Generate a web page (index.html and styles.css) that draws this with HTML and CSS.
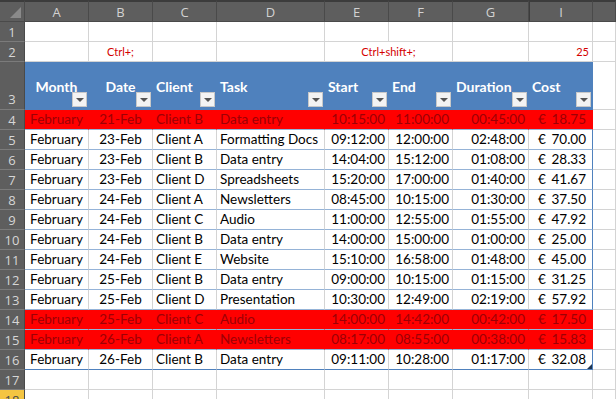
FILE: index.html
```html
<!DOCTYPE html>
<html>
<head>
<meta charset="utf-8">
<link rel="stylesheet" href="styles.css">
</head>
<body>
<div class="sheet">
  <div class="r hdr">
    <div class="c corner"><span class="tri"></span></div>
    <div class="c ch">A</div><div class="c ch">B</div><div class="c ch">C</div><div class="c ch">D</div>
    <div class="c ch">E</div><div class="c ch">F</div><div class="c ch">G</div><div class="c ch hid">I</div><div class="c ch"></div>
  </div>
  <div class="r">
    <div class="c rh">1</div>
    <div class="c"></div><div class="c"></div><div class="c"></div><div class="c"></div>
    <div class="c"></div><div class="c"></div><div class="c"></div><div class="c"></div><div class="c"></div>
  </div>
  <div class="r">
    <div class="c rh">2</div>
    <div class="c"></div><div class="c note ctr">Ctrl+;</div><div class="c"></div><div class="c"></div>
    <div class="c note ctr span2">Ctrl+shift+;</div><div class="c"></div><div class="c note rt">25</div><div class="c"></div>
  </div>
  <div class="r head">
    <div class="c rh rh3">3</div>
    <div class="c th ctr">Month<span class="dd"></span></div>
    <div class="c th ctr">Date<span class="dd"></span></div>
    <div class="c th">Client<span class="dd"></span></div>
    <div class="c th">Task<span class="dd"></span></div>
    <div class="c th">Start<span class="dd"></span></div>
    <div class="c th">End<span class="dd"></span></div>
    <div class="c th">Duration<span class="dd"></span></div>
    <div class="c th">Cost<span class="dd"></span></div>
    <div class="c"></div>
  </div>

  <div class="r t bad"><div class="c rh">4</div><div class="c ctr">February</div><div class="c ctr">21-Feb</div><div class="c">Client B</div><div class="c">Data entry</div><div class="c rt">10:15:00</div><div class="c rt">11:00:00</div><div class="c rt">00:45:00</div><div class="c cost"><span>€</span><span>18.75</span></div><div class="c"></div></div>
  <div class="r t"><div class="c rh">5</div><div class="c ctr">February</div><div class="c ctr">23-Feb</div><div class="c">Client A</div><div class="c">Formatting Docs</div><div class="c rt">09:12:00</div><div class="c rt">12:00:00</div><div class="c rt">02:48:00</div><div class="c cost"><span>€</span><span>70.00</span></div><div class="c"></div></div>
  <div class="r t"><div class="c rh">6</div><div class="c ctr">February</div><div class="c ctr">23-Feb</div><div class="c">Client B</div><div class="c">Data entry</div><div class="c rt">14:04:00</div><div class="c rt">15:12:00</div><div class="c rt">01:08:00</div><div class="c cost"><span>€</span><span>28.33</span></div><div class="c"></div></div>
  <div class="r t"><div class="c rh">7</div><div class="c ctr">February</div><div class="c ctr">23-Feb</div><div class="c">Client D</div><div class="c">Spreadsheets</div><div class="c rt">15:20:00</div><div class="c rt">17:00:00</div><div class="c rt">01:40:00</div><div class="c cost"><span>€</span><span>41.67</span></div><div class="c"></div></div>
  <div class="r t"><div class="c rh">8</div><div class="c ctr">February</div><div class="c ctr">24-Feb</div><div class="c">Client A</div><div class="c">Newsletters</div><div class="c rt">08:45:00</div><div class="c rt">10:15:00</div><div class="c rt">01:30:00</div><div class="c cost"><span>€</span><span>37.50</span></div><div class="c"></div></div>
  <div class="r t"><div class="c rh">9</div><div class="c ctr">February</div><div class="c ctr">24-Feb</div><div class="c">Client C</div><div class="c">Audio</div><div class="c rt">11:00:00</div><div class="c rt">12:55:00</div><div class="c rt">01:55:00</div><div class="c cost"><span>€</span><span>47.92</span></div><div class="c"></div></div>
  <div class="r t"><div class="c rh">10</div><div class="c ctr">February</div><div class="c ctr">24-Feb</div><div class="c">Client B</div><div class="c">Data entry</div><div class="c rt">14:00:00</div><div class="c rt">15:00:00</div><div class="c rt">01:00:00</div><div class="c cost"><span>€</span><span>25.00</span></div><div class="c"></div></div>
  <div class="r t"><div class="c rh">11</div><div class="c ctr">February</div><div class="c ctr">24-Feb</div><div class="c">Client E</div><div class="c">Website</div><div class="c rt">15:10:00</div><div class="c rt">16:58:00</div><div class="c rt">01:48:00</div><div class="c cost"><span>€</span><span>45.00</span></div><div class="c"></div></div>
  <div class="r t"><div class="c rh">12</div><div class="c ctr">February</div><div class="c ctr">25-Feb</div><div class="c">Client B</div><div class="c">Data entry</div><div class="c rt">09:00:00</div><div class="c rt">10:15:00</div><div class="c rt">01:15:00</div><div class="c cost"><span>€</span><span>31.25</span></div><div class="c"></div></div>
  <div class="r t"><div class="c rh">13</div><div class="c ctr">February</div><div class="c ctr">25-Feb</div><div class="c">Client D</div><div class="c">Presentation</div><div class="c rt">10:30:00</div><div class="c rt">12:49:00</div><div class="c rt">02:19:00</div><div class="c cost"><span>€</span><span>57.92</span></div><div class="c"></div></div>
  <div class="r t bad"><div class="c rh">14</div><div class="c ctr">February</div><div class="c ctr">25-Feb</div><div class="c">Client C</div><div class="c">Audio</div><div class="c rt">14:00:00</div><div class="c rt">14:42:00</div><div class="c rt">00:42:00</div><div class="c cost"><span>€</span><span>17.50</span></div><div class="c"></div></div>
  <div class="r t bad"><div class="c rh">15</div><div class="c ctr">February</div><div class="c ctr">26-Feb</div><div class="c">Client A</div><div class="c">Newsletters</div><div class="c rt">08:17:00</div><div class="c rt">08:55:00</div><div class="c rt">00:38:00</div><div class="c cost"><span>€</span><span>15.83</span></div><div class="c"></div></div>
  <div class="r t last"><div class="c rh">16</div><div class="c ctr">February</div><div class="c ctr">26-Feb</div><div class="c">Client B</div><div class="c">Data entry</div><div class="c rt">09:11:00</div><div class="c rt">10:28:00</div><div class="c rt">01:17:00</div><div class="c cost"><span>€</span><span>32.08</span><span class="grip"></span></div><div class="c"></div></div>

  <div class="r">
    <div class="c rh">17</div>
    <div class="c"></div><div class="c"></div><div class="c"></div><div class="c"></div>
    <div class="c"></div><div class="c"></div><div class="c"></div><div class="c"></div><div class="c"></div>
  </div>
  <div class="r">
    <div class="c rh sel">18</div>
    <div class="c"></div><div class="c"></div><div class="c"></div><div class="c"></div>
    <div class="c"></div><div class="c"></div><div class="c"></div><div class="c"></div><div class="c"></div>
  </div>
</div>
</body>
</html>
```

FILE: styles.css
```css
body {
  margin: 0;
  background: #ffffff;
  font-family: Lato, "Open Sans", "Liberation Sans", sans-serif;
}

.sheet {
  display: flex;
  flex-direction: column;
  width: 616px;
  height: 399px;
  overflow: hidden;
}

.r {
  display: grid;
  grid-template-columns: 25px 64px 64px 64px 108px 64px 64px 76px 64px 23px;
  height: 20px;
  flex: none;
}

.c {
  box-sizing: border-box;
  position: relative;
  display: flex;
  align-items: flex-end;
  padding: 0 3px 1px;
  border-right: 1px solid #d4d4d4;
  border-bottom: 1px solid #d4d4d4;
  white-space: nowrap;
  font-size: 13.5px;
  line-height: 18px;
  color: #000;
  overflow: hidden;
}

.ctr { justify-content: center; }
.rt { justify-content: flex-end; }
.span2 { grid-column: span 2; }

/* column header */
.hdr { height: 22px; }
.hdr .c {
  background: #5e5e5e;
  border-top: 2px solid #3c3c3c;
  border-right: 1px solid #4a4a4a;
  border-bottom: 1px solid #4a4a4a;
  align-items: center;
  justify-content: center;
  padding: 0;
  font-family: "Open Sans", "Noto Sans", sans-serif;
  font-size: 13px;
  color: #d2d2d2;
}
.hdr .hid { border-left: 1px solid #3c3c3c; }
.corner .tri {
  position: absolute;
  right: 3px;
  bottom: 3px;
  width: 0;
  height: 0;
  border-left: 11px solid transparent;
  border-bottom: 11px solid #8a8a8a;
}

/* row header */
.rh {
  background: #5e5e5e;
  border-right: 1px solid #4a4a4a;
  border-bottom: 1px solid #7b7b7b;
  align-items: center;
  justify-content: center;
  padding: 0;
  font-family: "Open Sans", "Noto Sans", sans-serif;
  font-size: 13px;
  color: #d6d6d6;
}
.rh.sel { background: #f4c542; color: #4a4a4a; }
.rh3 { align-items: flex-end; padding-bottom: 1px; }

/* row 2 notes */
.note {
  font-size: 11px;
  color: #d40000;
  align-items: center;
  padding-bottom: 0;
}

/* table header */
.head { height: 48px; }
.head .th {
  background: #4f81bd;
  border-right-color: #4f81bd;
  border-bottom-color: #4f81bd;
  color: #ffffff;
  font-weight: bold;
  font-size: 14px;
  align-items: center;
  padding-top: 3px;
  padding-bottom: 0;
}
.dd {
  position: absolute;
  right: 1px;
  bottom: 2px;
  width: 15px;
  height: 15px;
  box-sizing: border-box;
  background: #f3f3f3;
  border: 1px solid #c8c8c8;
}
.dd::after {
  content: "";
  position: absolute;
  left: 3px;
  top: 5px;
  border-left: 4px solid transparent;
  border-right: 4px solid transparent;
  border-top: 4px solid #555;
}

/* table body */
.t .c:nth-child(n+2):nth-child(-n+9) { border-bottom-color: #95b3d7; }
.t .c:nth-child(9) { border-right-color: #4f81bd; }
.t.last .c:nth-child(n+2):nth-child(-n+9) { border-bottom-color: #4f81bd; }

.bad .c:nth-child(n+2):nth-child(-n+9) {
  background: #ff0000;
  color: #9c0006;
  border-right-color: #ff0000;
}
.bad .c:nth-child(9) { border-right-color: #4f81bd; }

.cost {
  justify-content: space-between;
  padding-left: 9px;
  padding-right: 6px;
}
.grip {
  position: absolute;
  right: 0;
  bottom: 0;
  width: 0;
  height: 0;
  border-left: 5px solid transparent;
  border-bottom: 5px solid #1f3550;
}
```
